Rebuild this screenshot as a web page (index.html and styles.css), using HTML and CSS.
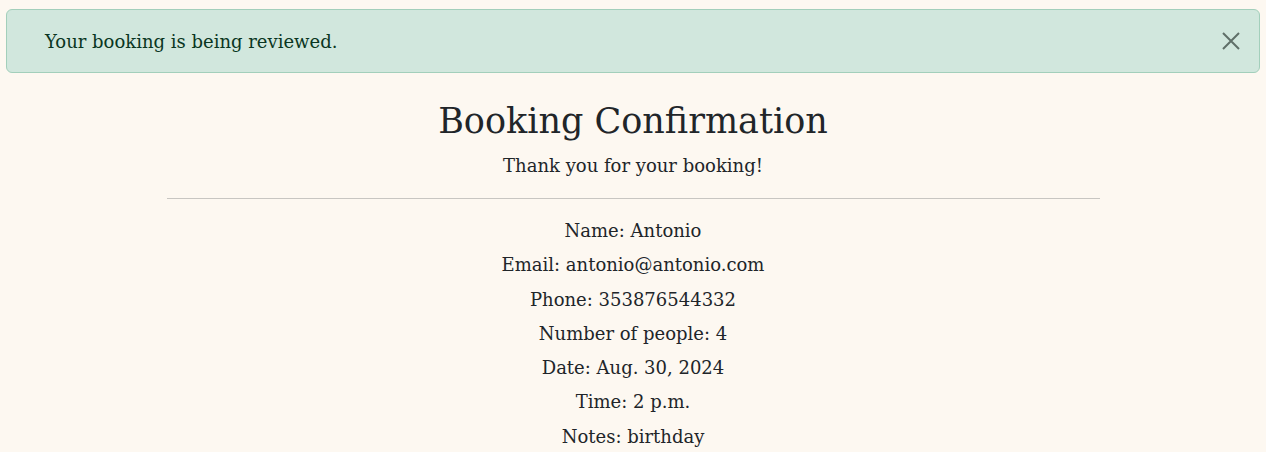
FILE: index.html
```html
<!DOCTYPE html>
<html lang="en">
<head>
<meta charset="utf-8">
<title>Booking Confirmation</title>
<link rel="stylesheet" href="styles.css">
</head>
<body>
<div class="page">
  <div class="alert" role="alert">
    <span class="alert-text">Your booking is being reviewed.</span>
    <button class="close" type="button" aria-label="Close">
      <svg width="18" height="18" viewBox="0 0 18 18"><path d="M1 1 L17 17 M17 1 L1 17" stroke="currentColor" stroke-width="2" fill="none"/></svg>
    </button>
  </div>
  <main class="content">
    <h1 class="title">Booking Confirmation</h1>
    <p class="subtitle">Thank you for your booking!</p>
    <hr class="divider">
    <div class="details">
      <p class="line">Name: Antonio</p>
      <p class="line">Email: antonio@antonio.com</p>
      <p class="line">Phone: 353876544332</p>
      <p class="line">Number of people: 4</p>
      <p class="line">Date: Aug. 30, 2024</p>
      <p class="line">Time: 2 p.m.</p>
      <p class="line">Notes: birthday</p>
    </div>
  </main>
</div>
</body>
</html>
```
FILE: styles.css
```css
html, body {
  margin: 0;
  padding: 0;
  background: #fdf8f1;
  color: #212529;
  font-family: "DejaVu Serif", serif;
}
.page {
  padding: 9px 6px 0 6px;
}
.alert {
  display: flex;
  align-items: center;
  justify-content: space-between;
  height: 64px;
  box-sizing: border-box;
  padding: 0 19px 0 38px;
  background: #d1e7dd;
  border: 1px solid #a3cfbb;
  border-radius: 6px;
  color: #0a3622;
  font-size: 18px;
}
.close {
  background: none;
  border: 0;
  padding: 0;
  width: 18px;
  height: 18px;
  color: #5f6f68;
  display: flex;
}
.content {
  display: flex;
  flex-direction: column;
  align-items: center;
  text-align: center;
}
.title {
  margin: 27px 0 0 0;
  font-size: 35px;
  font-weight: 400;
  line-height: 42px;
}
.subtitle {
  margin: 10px 0 0 0;
  font-size: 18px;
  line-height: 27px;
}
.divider {
  width: 933px;
  margin: 19px 0 0 0;
  border: 0;
  border-top: 1px solid #c8c6c2;
}
.details {
  margin-top: 15px;
}
.line {
  margin: 0;
  font-size: 18px;
  line-height: 34.3px;
}
```
